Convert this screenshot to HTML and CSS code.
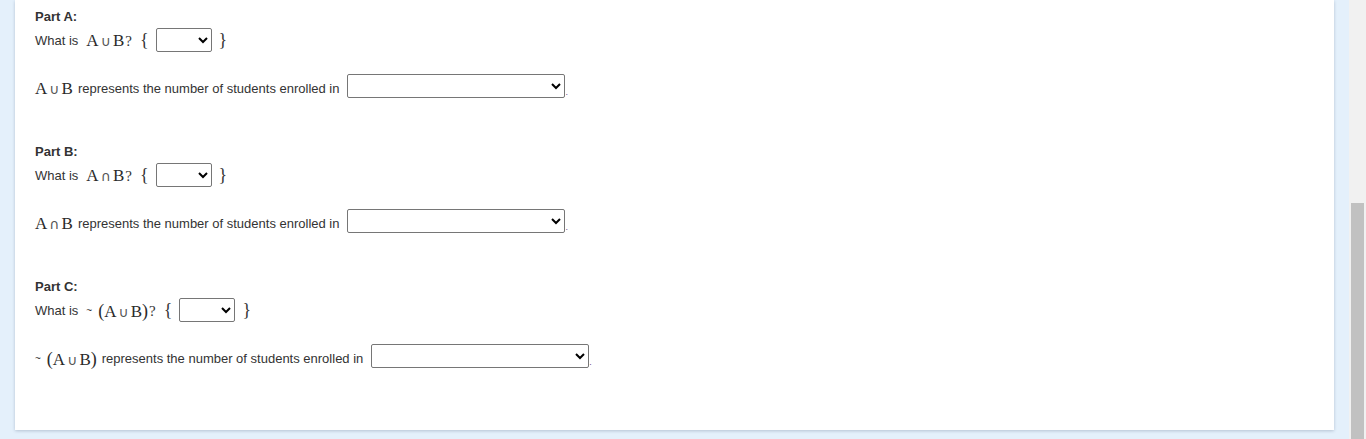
FILE: index.html
```html
<!DOCTYPE html>
<html lang="en">
<head>
<meta charset="utf-8">
<title>Sets question</title>
<link rel="stylesheet" href="styles.css">
</head>
<body>
<div class="page">
  <main class="main">
    <section class="card">
      <div class="part">
        <div class="label">Part A:</div>
        <div class="q">
          <span class="t">What is</span>
          <span class="math m-q"><span class="v">A</span><span class="op">∪</span><span class="v">B</span></span><span class="qm">?</span>
          <span class="brace bl">{</span>
          <select class="sel-s"><option></option></select>
          <span class="brace br">}</span>
        </div>
        <div class="r">
          <span class="math m-r"><span class="v">A</span><span class="op">∪</span><span class="v">B</span></span>
          <span class="rt">represents the number of students enrolled in</span>
          <select class="sel-l"><option></option></select><span class="dot">.</span>
        </div>
      </div>

      <div class="part">
        <div class="label">Part B:</div>
        <div class="q">
          <span class="t">What is</span>
          <span class="math m-q"><span class="v">A</span><span class="op">∩</span><span class="v">B</span></span><span class="qm">?</span>
          <span class="brace bl">{</span>
          <select class="sel-s"><option></option></select>
          <span class="brace br">}</span>
        </div>
        <div class="r">
          <span class="math m-r"><span class="v">A</span><span class="op">∩</span><span class="v">B</span></span>
          <span class="rt">represents the number of students enrolled in</span>
          <select class="sel-l"><option></option></select><span class="dot">.</span>
        </div>
      </div>

      <div class="part last">
        <div class="label">Part C:</div>
        <div class="q">
          <span class="t">What is</span>
          <span class="tilde tq">~</span>
          <span class="math m-q"><span class="paren">(</span><span class="v">A</span><span class="op">∪</span><span class="v">B</span><span class="paren">)</span></span><span class="qm">?</span>
          <span class="brace bl">{</span>
          <select class="sel-s"><option></option></select>
          <span class="brace br">}</span>
        </div>
        <div class="r">
          <span class="tilde">~</span>
          <span class="math m-r mc"><span class="paren">(</span><span class="v">A</span><span class="op">∪</span><span class="v">B</span><span class="paren">)</span></span>
          <span class="rt">represents the number of students enrolled in</span>
          <select class="sel-l"><option></option></select><span class="dot">.</span>
        </div>
      </div>
    </section>
  </main>
  <div class="scrollbar"><div class="thumb"></div></div>
</div>
</body>
</html>
```

FILE: styles.css
```css
html, body {
  margin: 0;
  padding: 0;
}
body {
  font-family: "Liberation Sans", Arial, sans-serif;
  font-size: 13px;
  color: #333;
}
.page {
  display: flex;
  height: 439px;
  overflow: hidden;
}
.main {
  flex: 1;
  background: #e4f0fb;
  padding: 0 15px 9px 15px;
}
.card {
  background: #fff;
  box-shadow: 0 1px 3px rgba(60, 80, 110, 0.28);
  padding: 8px 20px 62px 20px;
}
.part {
  margin-bottom: 45px;
}
.part.last {
  margin-bottom: 0;
}
.label {
  font-size: 13px;
  font-weight: bold;
  line-height: 16px;
  height: 16px;
  color: #333;
  padding-top: 1px;
  box-sizing: border-box;
}
.q, .r {
  display: flex;
  align-items: center;
  height: 24px;
  line-height: 16px;
  white-space: nowrap;
}
.q {
  margin-top: 4px;
}
.q .t, .q .math, .q .qm, .q .tilde {
  padding-top: 2px;
}
.r {
  margin-top: 22px;
}
.r .rt, .r .math, .r .tilde {
  padding-top: 6px;
}
.math {
  font-family: "Liberation Serif", "DejaVu Serif", serif;
  font-size: 17px;
  display: inline-flex;
  align-items: baseline;
  color: #2a2a2a;
}
.math .op {
  font-family: "DejaVu Sans", sans-serif;
  font-size: 14px;
  color: #555;
  margin: 0 2px 0 2px;
}
.m-q {
  margin-left: 8px;
}
.m-r {
  margin-right: 5px;
}
.paren {
  font-size: 18px;
}
.qm {
  font-family: "Liberation Serif", serif;
  font-size: 15px;
  margin-left: 1px;
}
.brace {
  font-family: "Liberation Serif", serif;
  font-size: 18px;
}
.bl {
  margin-left: 8px;
  margin-right: 7px;
}
.br {
  margin-left: 7px;
}
.tilde {
  font-size: 10px;
  color: #333;
}
.tq {
  margin-left: 8px;
}
.q .tq + .math {
  margin-left: 6px;
}
.tilde + .mc {
  margin-left: 6px;
}
select {
  box-sizing: border-box;
  height: 24px;
  border: 1px solid #767676;
  border-radius: 2px;
  background: #fff;
  font-family: "Liberation Sans", Arial, sans-serif;
  font-size: 13px;
}
.sel-s {
  width: 56px;
}
.sel-l {
  width: 218px;
  margin-left: 8px;
}
.dot {
  align-self: flex-end;
  font-size: 9px;
  line-height: 10px;
  color: #6b4a8a;
  margin-bottom: 1px;
}
.scrollbar {
  width: 17px;
  background: #f1f1f1;
  display: flex;
  flex-direction: column;
}
.thumb {
  margin: 203px 2px 0 2px;
  flex: 1;
  background: #c1c1c1;
}
```
